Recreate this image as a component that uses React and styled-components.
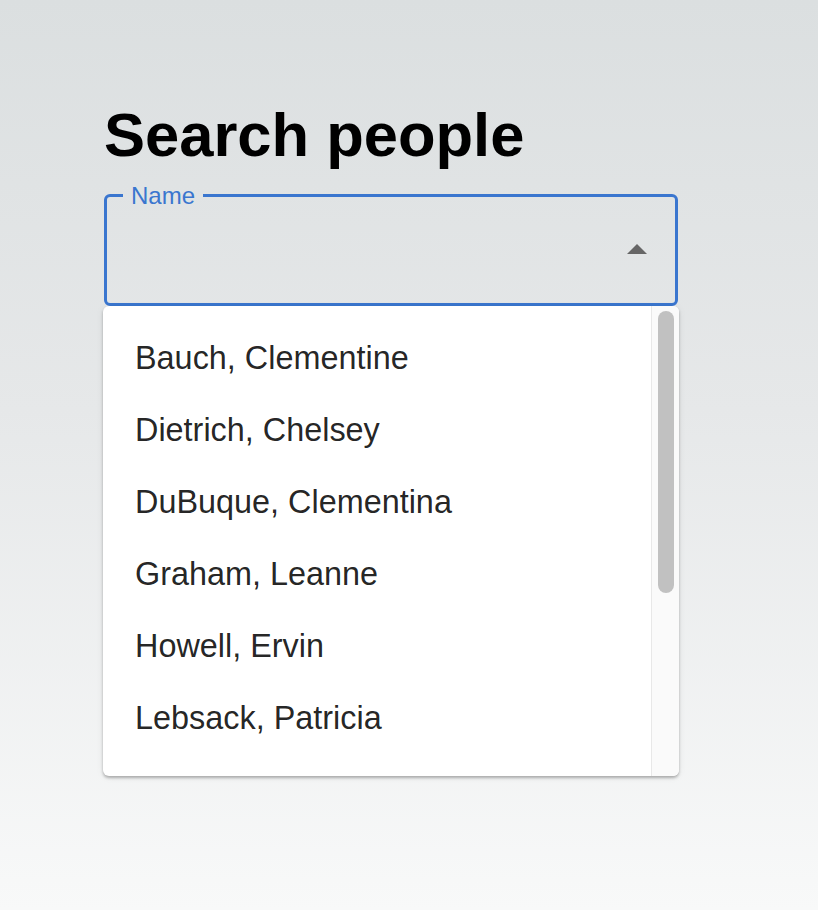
import React from 'react'
import styled, { createGlobalStyle } from 'styled-components'

const GlobalStyle = createGlobalStyle`
    html, body {
        margin: 0;
        padding: 0;
    }
    body {
        font-family: "Liberation Sans", Arial, sans-serif;
        background: linear-gradient(180deg, #dbdfe0 0%, #e6e8e9 45%, #f8f9f9 100%);
        min-height: 910px;
    }
`;

const Page = styled.div`
    min-height: 910px;
    padding: 104px 0 0 104px;
    box-sizing: border-box;
`;

const Title = styled.h1`
    margin: 0;
    font-size: 61.5px;
    line-height: 1;
    font-weight: 700;
    color: #000;
`;

const Field = styled.fieldset`
    margin: 18px 0 0;
    padding: 0;
    width: 574px;
    box-sizing: border-box;
    border: 3px solid #3a76cf;
    border-radius: 6px;
`;

const Label = styled.legend`
    margin-left: 16px;
    padding: 0 8px;
    font-size: 24px;
    line-height: 24px;
    color: #3a76cf;
`;

const InputRow = styled.div`
    height: 95px;
    display: flex;
    justify-content: flex-end;
    align-items: flex-start;
    padding: 36px 28px 0 0;
    box-sizing: border-box;
`;

const Popup = styled.div`
    margin: 0 0 0 -1px;
    width: 576px;
    height: 470px;
    background: #fff;
    border-radius: 6px;
    box-shadow: 0 2px 3px rgba(0, 0, 0, 0.28), 0 1px 8px rgba(0, 0, 0, 0.06);
    display: flex;
    overflow: hidden;
`;

const List = styled.ul`
    flex: 1;
    margin: 0;
    padding: 16px 0;
    list-style: none;
    overflow: hidden;
`;

const Option = styled.li`
    padding: 12px 32px;
    font-size: 32.4px;
    line-height: 48px;
    color: rgba(0, 0, 0, 0.87);
    white-space: nowrap;
`;

const Track = styled.div`
    width: 28px;
    border-left: 1px solid #e8e8e8;
    background: #fafafa;
    display: flex;
    justify-content: center;
    padding-top: 5px;
    box-sizing: border-box;
`;

const Thumb = styled.div`
    width: 16px;
    height: 282px;
    border-radius: 8px;
    background: #c1c1c1;
`;

const Arrow = () => (
    <svg width="20" height="10" viewBox="0 0 20 10">
        <path d="M0 10 L10 0 L20 10 Z" fill="#666" />
    </svg>
);

const people = [
    'Bauch, Clementine',
    'Dietrich, Chelsey',
    'DuBuque, Clementina',
    'Graham, Leanne',
    'Howell, Ervin',
    'Lebsack, Patricia',
];

const App = () => {
    return (
        <Page>
            <GlobalStyle />
            <Title>Search people</Title>
            <Field>
                <Label>Name</Label>
                <InputRow>
                    <Arrow />
                </InputRow>
            </Field>
            <Popup>
                <List>
                    {people.map((p) => (
                        <Option key={p}>{p}</Option>
                    ))}
                </List>
                <Track>
                    <Thumb />
                </Track>
            </Popup>
        </Page>
    )
}

export default App
